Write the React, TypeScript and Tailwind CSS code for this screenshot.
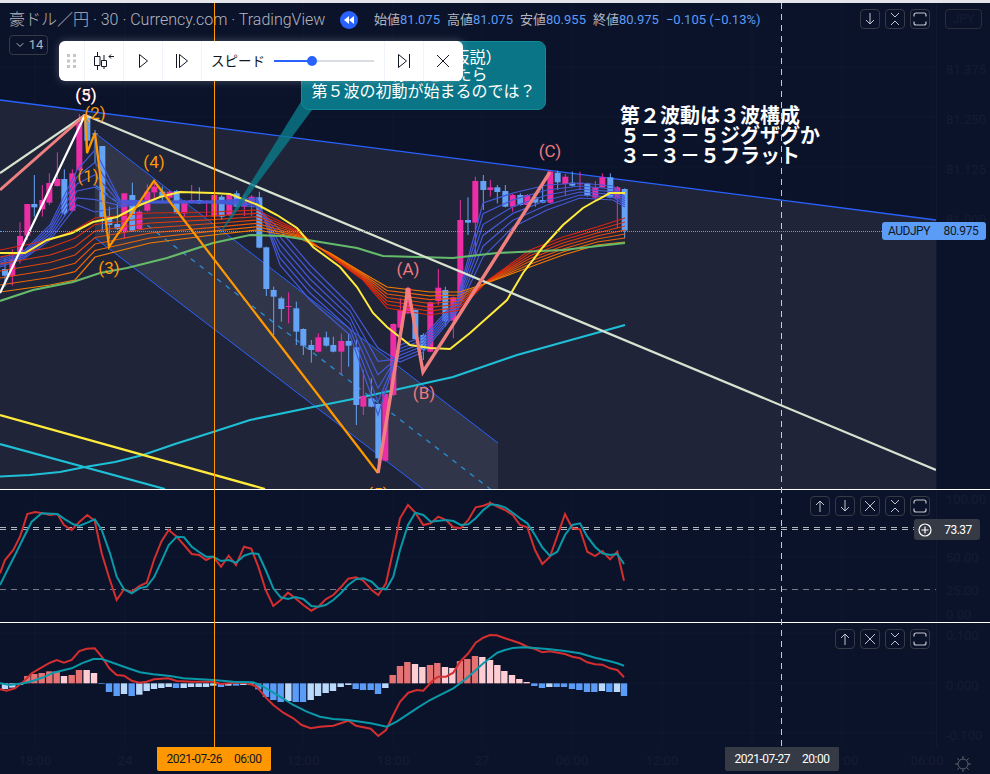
import { ChevronDown } from 'lucide-react'

type P = number[]
type Candle = [number, number, number, number, number, 'p' | 'b']

const line = (pts: P[]) => pts.map(p => p[0].toFixed(1) + ',' + p[1].toFixed(1)).join(' ')
// все данные сняты с увеличенных кропов (3x), тут пересчёт обратно
const zoomed = (pts: P[], ox: number, oy: number) => pts.map(p => [p[0] / 3 + ox, p[1] / 3 + oy])

const candlesA: Candle[] = [
  [15, 537, 557, 505, 590, 'b'], [37, 508, 557, 478, 587, 'p'], [60, 438, 497, 397, 520, 'p'],
  [82, 342, 437, 342, 450, 'p'], [103, 342, 352, 255, 380, 'b'], [127, 330, 358, 285, 380, 'p'],
  [148, 279, 338, 250, 345, 'p'], [172, 267, 288, 187, 290, 'p'], [193, 267, 370, 238, 375, 'b'],
  [217, 250, 362, 238, 365, 'p'], [238, 100, 240, 72, 245, 'p'], [262, 80, 152, 80, 190, 'b'],
  [285, 130, 132, 120, 220, 'b'], [307, 168, 382, 168, 425, 'b'], [328, 378, 405, 350, 448, 'b'],
  [352, 402, 417, 340, 420, 'b'], [373, 310, 423, 310, 445, 'p'], [397, 315, 422, 278, 425, 'b'],
  [418, 365, 417, 360, 420, 'p'], [442, 305, 362, 283, 365, 'p'], [463, 290, 307, 270, 330, 'p'],
  [487, 305, 320, 290, 335, 'b'], [509, 305, 323, 300, 330, 'p'], [530, 303, 370, 300, 372, 'b'],
  [553, 335, 370, 330, 380, 'p'], [575, 330, 338, 285, 340, 'p'], [598, 330, 340, 292, 342, 'b'],
  [620, 335, 338, 330, 380, 'p'], [643, 315, 380, 310, 382, 'p'], [665, 320, 380, 315, 390, 'b'],
  [688, 315, 375, 312, 378, 'p'], [710, 310, 350, 302, 352, 'b'], [733, 330, 350, 312, 378, 'p'],
  [755, 320, 340, 315, 378, 'p'],
]
const candlesB: Candle[] = [
  [88, 82, 233, 65, 235, 'b'], [109, 232, 357, 230, 378, 'b'], [131, 360, 380, 350, 495, 'b'],
  [154, 385, 417, 380, 455, 'b'], [176, 408, 410, 367, 460, 'p'], [199, 415, 485, 395, 525, 'b'],
  [220, 477, 527, 475, 555, 'b'], [244, 525, 540, 510, 578, 'b'], [265, 502, 545, 490, 547, 'p'],
  [289, 502, 527, 485, 530, 'b'], [310, 525, 545, 500, 547, 'b'], [334, 513, 545, 490, 615, 'p'],
  [356, 513, 527, 490, 590, 'b'], [379, 532, 705, 510, 765, 'b'], [400, 678, 710, 600, 735, 'p'],
  [424, 685, 710, 625, 712, 'b'], [445, 702, 865, 700, 890, 'b'], [466, 672, 872, 655, 875, 'p'],
  [490, 462, 675, 460, 678, 'p'], [511, 420, 473, 385, 475, 'p'], [534, 355, 430, 350, 432, 'p'],
  [556, 420, 507, 418, 510, 'b'], [580, 495, 540, 490, 570, 'b'], [601, 397, 545, 395, 547, 'p'],
  [625, 353, 393, 297, 405, 'p'], [646, 360, 453, 350, 470, 'b'], [670, 382, 452, 380, 505, 'p'],
  [691, 150, 392, 90, 395, 'p'], [714, 150, 158, 82, 195, 'b'], [736, 33, 158, 20, 260, 'p'],
  [760, 33, 60, 15, 120, 'b'], [781, 52, 60, 30, 80, 'p'], [802, 52, 66, 45, 100, 'b'],
  [826, 63, 110, 45, 112, 'b'], [848, 75, 110, 72, 125, 'p'], [871, 75, 105, 70, 107, 'b'],
  [892, 75, 105, 72, 107, 'p'], [916, 82, 98, 70, 110, 'b'], [938, 90, 98, 42, 100, 'b'],
  [961, 5, 98, 2, 100, 'p'], [983, 8, 37, 2, 60, 'b'], [1006, 20, 42, 12, 75, 'p'],
  [1027, 38, 47, 5, 50, 'b'], [1050, 40, 42, 5, 60, 'p'], [1072, 40, 78, 38, 80, 'b'],
  [1096, 52, 83, 33, 95, 'p'], [1117, 22, 52, 10, 54, 'p'], [1141, 22, 83, 10, 85, 'b'],
  [1162, 52, 85, 48, 175, 'p'], [1184, 57, 182, 55, 205, 'b'],
]

const ribbonX = [0, 50, 75, 95, 150, 213, 257, 297, 330, 363, 387, 430, 460, 487, 530, 563, 597, 625]
const ribbonFast = [250, 240, 230, 218, 213, 212, 210, 230, 256, 280, 308, 315, 310, 281, 250, 237, 227, 218]
const ribbonSlow = [292, 285, 280, 257, 243, 235, 230, 237, 253, 273, 287, 292, 292, 283, 267, 255, 245, 242]
const reds = ['#d4260f', '#d82f0f', '#dc3a0f', '#e0460e', '#e5540c', '#ec6608', '#f57c00']

const blueX = [0, 25, 50, 77, 95, 120, 150, 215, 257, 280, 310, 350, 378, 400, 423, 457, 483, 513, 547, 580, 613, 625]
const blueFast = [258, 250, 225, 170, 150, 200, 201, 201, 198, 265, 300, 335, 415, 345, 337, 300, 203, 193, 185, 183, 186, 197]
const blueSlow = [267, 258, 240, 205, 212, 207, 203, 203, 207, 230, 265, 305, 348, 362, 352, 312, 257, 227, 210, 198, 200, 207]

const yellow: P[] = [[0, 253], [25, 253], [47, 240], [72, 233], [93, 222], [117, 217], [140, 205], [160, 197], [180, 192], [213, 193], [230, 194], [258, 205], [277, 215], [297, 228], [313, 247], [340, 267], [357, 287], [373, 313], [387, 327], [410, 345], [430, 348], [450, 349], [470, 333], [507, 300], [523, 273], [543, 247], [563, 225], [583, 208], [597, 200], [610, 193], [625, 193]]
const green: P[] = [[0, 301], [33, 290], [73, 282], [100, 273], [127, 268], [167, 258], [213, 243], [250, 235], [283, 236], [357, 248], [383, 256], [453, 258], [497, 253], [563, 250], [625, 243]]
const cyan: P[] = [[0, 476.5], [30, 475], [60, 472], [85, 467], [115, 462], [143, 455], [175, 444], [213, 432], [250, 420], [313, 407], [363, 397], [453, 377], [517, 355], [625, 325]]

const stochRed = [...zoomed([[0, 250], [15, 210], [40, 180], [60, 140], [82, 72], [105, 66], [128, 70], [150, 75], [172, 72], [192, 105], [215, 120], [238, 96], [262, 75], [284, 92], [305, 190], [328, 265], [350, 330], [372, 298], [395, 305], [418, 288], [440, 278], [462, 210], [484, 155], [506, 120], [530, 140], [552, 165], [575, 192], [597, 195], [618, 210], [640, 200], [663, 230], [686, 197], [708, 225], [732, 170], [754, 176], [775, 230], [797, 300], [820, 348], [842, 330], [864, 308], [886, 325], [910, 345], [934, 362], [955, 350], [977, 328], [1000, 315], [1022, 292], [1045, 266], [1068, 262], [1090, 272], [1115, 300], [1135, 315], [1158, 280], [1180, 180], [1200, 85], [1224, 45], [1246, 68], [1270, 105], [1292, 100], [1315, 80], [1338, 90], [1360, 112], [1382, 115], [1405, 90], [1427, 52], [1450, 47], [1470, 40]], 0, 490),
  ...zoomed([[0, 38], [22, 50], [45, 60], [68, 75], [90, 105], [112, 112], [135, 180], [157, 222], [180, 200], [202, 138], [225, 72], [247, 115], [270, 118], [292, 185], [315, 198], [337, 183], [360, 208], [382, 185], [402, 272]], 490, 490)]
const stochTeal = [...zoomed([[0, 285], [25, 235], [50, 185], [72, 140], [95, 95], [125, 70], [172, 72], [195, 88], [220, 103], [238, 108], [262, 98], [284, 88], [305, 120], [330, 190], [350, 260], [372, 298], [395, 310], [418, 295], [440, 290], [462, 262], [484, 215], [506, 165], [530, 140], [552, 142], [575, 170], [597, 186], [618, 200], [640, 200], [663, 213], [686, 210], [708, 218], [732, 197], [754, 190], [775, 192], [797, 240], [820, 295], [842, 322], [864, 327], [886, 321], [910, 327], [934, 348], [955, 350], [977, 345], [1000, 330], [1022, 310], [1045, 285], [1068, 268], [1090, 265], [1115, 275], [1135, 295], [1158, 298], [1180, 260], [1200, 180], [1224, 105], [1246, 68], [1270, 75], [1292, 95], [1338, 90], [1360, 93], [1382, 105], [1405, 103], [1427, 85], [1450, 60], [1470, 45]], 0, 490),
  ...zoomed([[0, 43], [22, 45], [45, 52], [68, 68], [90, 85], [112, 100], [135, 135], [157, 172], [180, 198], [202, 185], [225, 135], [247, 105], [270, 100], [292, 140], [315, 170], [337, 190], [360, 195], [382, 192], [402, 222]], 490, 490)]

const macdRed = [...zoomed([[0, 598], [20, 602], [45, 595], [70, 575], [95, 550], [120, 535], [150, 518], [170, 510], [192, 518], [215, 510], [238, 483], [260, 476], [284, 475], [305, 500], [328, 535], [350, 555], [372, 557], [395, 572], [418, 578], [440, 575], [462, 568], [505, 565], [530, 573], [575, 575], [640, 575], [663, 582], [700, 578], [740, 578], [770, 590], [795, 620], [820, 645], [850, 668], [880, 685], [905, 705], [932, 715], [960, 710], [1000, 707], [1045, 692], [1068, 707], [1112, 716], [1135, 738], [1158, 720], [1180, 675], [1200, 635], [1225, 608], [1250, 600], [1270, 602], [1300, 570], [1315, 560], [1338, 560], [1360, 548], [1380, 515], [1405, 490], [1427, 458], [1450, 443], [1470, 435]], 0, 490),
  ...zoomed([[0, 435], [20, 436], [45, 445], [68, 452], [90, 460], [112, 470], [135, 477], [157, 487], [180, 484], [225, 492], [247, 500], [270, 505], [292, 517], [315, 523], [337, 524], [360, 535], [382, 540], [402, 562]], 490, 490)]
const macdTeal = [...zoomed([[0, 580], [30, 585], [70, 580], [100, 572], [130, 562], [160, 548], [190, 541], [215, 535], [245, 520], [280, 507], [305, 507], [330, 515], [380, 533], [420, 547], [460, 553], [510, 558], [550, 565], [640, 570], [700, 575], [760, 577], [790, 590], [840, 620], [880, 645], [920, 665], [960, 680], [1000, 687], [1045, 690], [1112, 700], [1160, 710], [1190, 695], [1250, 655], [1290, 630], [1360, 595], [1400, 565], [1450, 520]], 0, 490),
  ...zoomed([[0, 505], [22, 488], [45, 480], [68, 474], [100, 472], [135, 474], [180, 478], [225, 483], [270, 490], [315, 503], [360, 514], [382, 520], [402, 527]], 490, 490)]

// 0 светло-голубой, 1 голубой, 2 розовый, 3 светло-розовый
const histColors = ['#bbd9fb', '#5b9cf6', '#e57373', '#ffcdd2']
const histA: [number, number, number][] = [
  [15, 597, 0], [37, 593, 0], [60, 585, 0], [82, 558, 2], [103, 552, 2], [125, 549, 2], [148, 544, 2], [170, 544, 2], [192, 558, 3], [215, 555, 2], [237, 540, 2], [260, 540, 3], [282, 549, 3], [305, 582, 1], [327, 606, 1], [350, 618, 1], [372, 612, 0], [395, 618, 1], [418, 614, 0], [440, 603, 0], [462, 597, 0], [484, 594, 0], [506, 591, 0], [528, 594, 1], [551, 594, 0], [573, 591, 0], [596, 591, 0], [618, 591, 0], [640, 587, 0], [663, 591, 1], [685, 587, 0], [708, 587, 1], [730, 585, 0], [752, 584, 0], [775, 598, 1], [798, 621, 1], [820, 630, 1], [842, 636, 1], [865, 633, 0], [887, 636, 1], [909, 636, 1], [932, 630, 0], [954, 618, 0], [977, 609, 0], [999, 603, 0], [1022, 591, 0], [1045, 585, 0], [1067, 597, 1], [1089, 600, 1], [1112, 600, 1], [1134, 612, 1], [1156, 594, 0], [1178, 555, 2], [1200, 528, 2], [1222, 516, 2], [1245, 522, 3], [1267, 531, 3], [1290, 525, 2], [1312, 519, 2], [1335, 531, 3], [1357, 534, 3], [1380, 513, 2], [1402, 507, 2], [1425, 498, 2], [1447, 501, 3], [1470, 510, 3], [1492, 525, 3],
]
const histB: [number, number, number][] = [
  [43, 543, 3], [66, 555, 3], [88, 567, 3], [110, 576, 3], [133, 588, 1], [156, 594, 1], [178, 591, 0], [200, 591, 1], [222, 591, 1], [246, 597, 1], [268, 600, 1], [291, 606, 1], [313, 606, 1], [336, 603, 0], [358, 606, 1], [381, 606, 0], [402, 618, 1],
]

const gridX = [35, 125, 214, 303, 393, 482, 572, 662, 752, 842, 932]
const timeTicks: [string, number][] = [['18:00', 35], ['24', 125], ['12:00', 303], ['18:00', 393], ['27', 482], ['06:00', 572], ['12:00', 662], ['18:00', 842], ['06:00', 927]]

function GridLines({ rows }: { rows: number[] }) {
  return (
    <g stroke="#ffffff" strokeOpacity="0.025">
      {gridX.map(x => <line key={x} x1={x} x2={x} y1="0" y2="774" />)}
      {rows.map(y => <line key={y} x1="0" x2="936" y1={y} y2={y} />)}
    </g>
  )
}

function Candles({ data, ox, oy }: { data: Candle[]; ox: number; oy: number }) {
  return (
    <>
      {data.map(c => {
        const x = c[0] / 3 + ox
        const col = c[5] === 'p' ? '#ec2da6' : '#64a2f6'
        return (
          <g key={c[0]}>
            <line x1={x} x2={x} y1={c[3] / 3 + oy} y2={c[4] / 3 + oy} stroke={col} strokeWidth="1" />
            <rect x={x - 3} width="6" y={c[1] / 3 + oy} height={Math.max((c[2] - c[1]) / 3, 1)} fill={col} />
          </g>
        )
      })}
    </>
  )
}

function MainChart() {
  const labels = 'Roboto, sans-serif'
  return (
    <svg className="absolute inset-0 w-[936px] h-[486px]" viewBox="0 3 936 486">
      <GridLines rows={[67, 117, 167, 217, 267, 317, 367, 417, 467]} />
      <polygon points="0,100 936,220 936,489 0,489" fill="#1f2439" />
      <polygon points="95,133 498,443 498,489 423,489 95,238" fill="#303549" />
      <line x1="0" y1="100" x2="936" y2="220" stroke="#2962ff" strokeWidth="1.3" />
      <line x1="95" y1="133" x2="498" y2="443" stroke="#2962ff" strokeWidth="1" />
      <line x1="95" y1="238" x2="423" y2="489" stroke="#2962ff" strokeWidth="1" />
      <line x1="95" y1="185" x2="498" y2="495" stroke="#2a8fd8" strokeWidth="1.3" strokeDasharray="5 6" />

      <polyline points={line(cyan)} fill="none" stroke="#1fc0d6" strokeWidth="2.2" />
      <line x1="0" y1="415" x2="265" y2="489" stroke="#ffeb3b" strokeWidth="2.2" />
      <line x1="0" y1="444" x2="165" y2="489" stroke="#1fc0d6" strokeWidth="2.2" />

      <Candles data={candlesA} ox={0} oy={90} />
      <Candles data={candlesB} ox={230} oy={170} />

      {[0, 1, 2, 3, 4, 5].map(i => (
        <polyline
          key={i}
          fill="none"
          stroke="#4459d6"
          strokeWidth="1.2"
          points={line(blueX.map((x, k) => [x, blueFast[k] + ((blueSlow[k] - blueFast[k]) * i) / 5]))}
        />
      ))}
      {reds.map((c, i) => (
        <polyline
          key={c}
          fill="none"
          stroke={c}
          strokeWidth="1.2"
          points={line(ribbonX.map((x, k) => [x, ribbonFast[k] + ((ribbonSlow[k] - ribbonFast[k]) * i) / 6]))}
        />
      ))}
      <polyline points={line(green)} fill="none" stroke="#66bb6a" strokeWidth="2.2" />
      <polyline points={line(yellow)} fill="none" stroke="#ffeb3b" strokeWidth="2" />

      <line x1="85" y1="115" x2="936" y2="470" stroke="#d5e3cf" strokeWidth="2.2" />
      <line x1="0" y1="173" x2="85" y2="115" stroke="#d5e3cf" strokeWidth="2.2" />
      <line x1="0" y1="190" x2="85" y2="115" stroke="#f08080" strokeWidth="3" />
      <line x1="0" y1="293" x2="85" y2="115" stroke="#ffffff" strokeWidth="2.2" />

      <polyline points="85,115 87,153 95,133 109,247 154,181 378,473" fill="none" stroke="#ff9800" strokeWidth="2.2" />
      <polyline points="378,473 408,288 423,372 550,172" fill="none" stroke="#f08080" strokeWidth="3.4" />

      <g fontFamily={labels} fontSize="17" textAnchor="middle">
        <text x="86" y="101" fill="#f08080">(3)</text>
        <text x="86" y="101" fill="#ffffff">(5)</text>
        <g fill="#ff9800">
          <text x="95" y="119">(2)</text>
          <text x="88" y="182">(1)</text>
          <text x="109" y="274">(3)</text>
          <text x="154" y="168">(4)</text>
          <text x="378" y="500">(5)</text>
        </g>
        <g fill="#ef7a7e">
          <text x="408" y="275">(A)</text>
          <text x="424" y="399">(B)</text>
          <text x="550" y="157">(C)</text>
        </g>
      </g>
      <polygon points="214,242 302,100 312,110" fill="#0a7a8a" fillOpacity="0.8" />
    </svg>
  )
}

function Crosshair() {
  return (
    <svg className="absolute inset-0 w-[990px] h-[774px] pointer-events-none" viewBox="0 0 990 774">
      <line x1="214.5" x2="214.5" y1="3" y2="747" stroke="#ff9800" strokeWidth="1" />
      <line x1="781.5" x2="781.5" y1="3" y2="747" stroke="#c8cad0" strokeWidth="1" strokeDasharray="6 5" />
    </svg>
  )
}

function Glyph({ kind }: { kind: string }) {
  return (
    <svg width="14" height="14" viewBox="0 0 14 14" fill="none" stroke="currentColor" strokeWidth="1">
      {kind === 'up' && <path d="M7 13V2M3 6l4-4 4 4" />}
      {kind === 'down' && <path d="M7 1v11M3 8l4 4 4-4" />}
      {kind === 'close' && <path d="M2 2l10 10M12 2L2 12" />}
      {kind === 'collapse' && <path d="M3 1l4 4 4-4M3 13l4-4 4 4" />}
      {kind === 'max' && <path d="M1 4.500V3a2 2 0 0 1 2-2h8a2 2 0 0 1 2 2v1.500M1 9.500V11a2 2 0 0 0 2 2h8a2 2 0 0 0 2-2V9.500" strokeWidth="1.2" />}
    </svg>
  )
}

function PaneButtons({ kinds }: { kinds: string[] }) {
  return (
    <div className="absolute right-[6px] top-[6px] flex gap-[5px]">
      {kinds.map(k => (
        <button key={k} className="w-[20px] h-[20px] flex items-center justify-center rounded-[4px] border border-[#363a45] bg-[#0b132b] text-[#c3c5cc]">
          <Glyph kind={k} />
        </button>
      ))}
    </div>
  )
}

function AxisLabels({ items }: { items: [string, number][] }) {
  return (
    <div className="relative w-[54px] shrink-0 overflow-hidden border-l border-[#121a31] text-[13px] text-[#151c33]">
      {items.map(([t, y]) => (
        <div key={t} className="absolute left-[9px]" style={{ top: y }}>{t}</div>
      ))}
    </div>
  )
}

function Toolbar() {
  const cell = 'w-[39px] h-full flex items-center justify-center border-l border-[#f0f3fa] text-[#131722]'
  return (
    <div className="absolute left-[59px] top-[41px] w-[404px] h-[40px] flex items-center bg-white rounded-[6px] shadow-[0_0_8px_rgba(255,255,255,0.25)]">
      <div className="w-[25px] h-full flex items-center justify-center">
        <svg width="9" height="14" viewBox="0 0 9 14" fill="#c4c6cc">
          {[0, 1, 2].map(r => [0, 1].map(c => <rect key={r + '-' + c} x={c * 6} y={r * 5.5} width="3" height="3" />))}
        </svg>
      </div>
      <div className={cell}>
        <svg width="22" height="20" viewBox="0 0 22 20" fill="none" stroke="currentColor" strokeWidth="1">
          <path d="M4.500 1v5M4.500 14v5M1.500 5.500h5.500v9h-5.500zM11 4v6M11 15v3M8.500 9.500h5v6h-5z" />
          <path d="M16 5.500h5M18 3.500l-2 2 2 2" />
        </svg>
      </div>
      <div className={cell}>
        <svg width="12" height="16" viewBox="0 0 12 16" fill="none" stroke="currentColor"><path d="M2.500 1.500v13l8-6.500z" /></svg>
      </div>
      <div className={cell}>
        <svg width="14" height="16" viewBox="0 0 14 16" fill="none" stroke="currentColor"><path d="M1.500 1v14M4.500 1.500v13l8-6.500z" /></svg>
      </div>
      <div className="w-[183px] h-full flex items-center border-l border-[#f0f3fa] pl-[9px]">
        <span className="text-[13.5px] text-[#131722] w-[63px] shrink-0">スピード</span>
        <div className="relative w-[100px] h-[2px] bg-[#d9dce3]">
          <div className="w-[38px] h-full bg-[#2962ff]" />
          <div className="absolute left-[33px] top-[-4px] w-[10px] h-[10px] rounded-full bg-[#2962ff]" />
        </div>
      </div>
      <div className={cell}>
        <svg width="14" height="16" viewBox="0 0 14 16" fill="none" stroke="currentColor"><path d="M12.500 1v14M1.500 1.500v13l8-6.500z" /></svg>
      </div>
      <div className={cell}>
        <svg width="14" height="14" viewBox="0 0 14 14" fill="none" stroke="currentColor"><path d="M1 1l12 12M13 1L1 13" /></svg>
      </div>
    </div>
  )
}

function Ohlc({ k, v }: { k: string; v: string }) {
  return (
    <span className="text-[#b2b5be]">
      {k}
      <span className="text-[#5b9cf6]">{v}</span>
    </span>
  )
}

export default function App() {
  return (
    <div
      className="relative w-[990px] h-[774px] flex flex-col overflow-hidden bg-[#0b132b] select-none"
      style={{ fontFamily: 'Roboto, "Noto Sans CJK JP", sans-serif' }}
    >
      <div className="h-[3px] bg-[#e3e5ea]" />

      {/* основной график */}
      <div className="relative h-[486px] flex">
        <div className="relative w-[936px] overflow-hidden">
          <MainChart />
          <div className="relative h-[32px] pt-[2px] flex items-center pl-[9px]">
            <span className="text-[16px] font-light text-[#b2b5be] w-[325px] shrink-0 whitespace-pre">豪ドル／円 · 30 · Currency.com · TradingView</span>
            <span className="ml-[6px] w-[18px] h-[18px] rounded-full bg-[#2962ff] flex items-center justify-center">
              <svg width="10" height="8" viewBox="0 0 10 8" fill="#fff"><path d="M5 0v8L0 4zM10 0v8L5 4z" /></svg>
            </span>
            <div className="ml-[16px] flex gap-[7px] text-[13px]">
              <Ohlc k="始値" v="81.075" />
              <Ohlc k="高値" v="81.075" />
              <Ohlc k="安値" v="80.955" />
              <Ohlc k="終値" v="80.975" />
              <span className="text-[#5b9cf6]">−0.105 (−0.13%)</span>
            </div>
          </div>
          <div className="relative ml-[9px] w-[39px] h-[20px] flex items-center justify-center gap-[3px] rounded-[4px] border border-[#363a45] text-[#b2b5be] text-[13px]">
            <ChevronDown size={12} />
            14
          </div>
          <PaneButtons kinds={['down', 'collapse', 'max']} />
          <div className="absolute left-[620px] top-[103px] text-[20px] leading-[20px] font-bold text-white whitespace-pre">
            <div>第２波動は３波構成</div>
            <div>５－３－５ジグザグか</div>
            <div>３－３－５フラット</div>
          </div>
          <div className="absolute left-0 top-[228px] w-[884px] border-t border-dotted border-[#5b9cf6]" />
          <div className="absolute left-[882px] top-[219px] w-[54px] h-[18px] flex items-center justify-center rounded-l-[3px] bg-[#5b9cf6] text-[12px] tracking-[-0.5px] text-[#131722]">AUDJPY</div>
          <div className="absolute left-[301px] top-[38px] w-[245px] h-[69px] pt-[7px] rounded-[8px] border border-[#118a99] bg-[#097586] text-center text-[16px] leading-[17px] text-white">
            <div className="pr-[4px]">第５波の上昇（仮説）</div>
            <div>この線を超えたら</div>
            <div>第５波の初動が始まるのでは？</div>
          </div>
        </div>
        <AxisLabels items={[['81.375', 57], ['81.250', 107], ['81.125', 157], ['81.000', 207]]} />
        <div className="absolute left-[936px] top-[219px] w-[50px] h-[18px] flex items-center justify-center rounded-r-[3px] bg-[#5b9cf6] text-[12px] tracking-[-0.3px] text-[#131722]">80.975</div>
        <div className="absolute left-[945px] top-[6px] w-[37px] h-[20px] rounded-[4px] border border-[#2a2e39] text-[12px] text-[#151c33] flex items-center justify-center">JPY</div>
      </div>

      <div className="h-px bg-white" />

      {/* ストキャス */}
      <div className="relative h-[132px] flex">
        <div className="relative w-[936px] overflow-hidden">
          <svg className="absolute inset-0 w-[936px] h-[132px]" viewBox="0 490 936 132">
            <GridLines rows={[557, 590]} />
            <line x1="0" x2="936" y1="527.500" y2="527.500" stroke="#b2b5be" strokeDasharray="6 5" />
            <line x1="0" x2="936" y1="529.500" y2="529.500" stroke="#b2b5be" strokeDasharray="6 5" />
            <line x1="0" x2="936" y1="589.500" y2="589.500" stroke="#787b86" strokeDasharray="6 5" />
            <polyline points={line(stochRed)} fill="none" stroke="#d32f2f" strokeWidth="2" />
            <polyline points={line(stochTeal)} fill="none" stroke="#0a99a8" strokeWidth="2" />
          </svg>
          <PaneButtons kinds={['up', 'down', 'close', 'collapse', 'max']} />
          <div className="absolute left-[914px] top-[29px] w-[22px] h-[21px] flex items-center justify-center rounded-l-[3px] bg-[#363a45]">
            <svg width="14" height="14" viewBox="0 0 14 14" fill="none" stroke="#fff" strokeWidth="1.2">
              <circle cx="7" cy="7" r="6" />
              <path d="M7 3.500v7M3.500 7h7" />
            </svg>
          </div>
        </div>
        <AxisLabels items={[['100.00', 0], ['50.00', 58], ['25.00', 91], ['0.00', 115]]} />
        <div className="absolute left-[936px] top-[29px] w-[44px] h-[21px] flex items-center justify-center rounded-r-[3px] bg-[#363a45] text-[12px] tracking-[-0.5px] text-white">73.37</div>
      </div>

      <div className="h-px bg-white" />

      {/* MACD */}
      <div className="relative h-[124px] flex">
        <div className="relative w-[936px] overflow-hidden">
          <svg className="absolute inset-0 w-[936px] h-[124px]" viewBox="0 623 936 124">
            <GridLines rows={[633, 683, 733]} />
            {histA.map(b => (
              <rect key={b[0]} x={b[0] / 3 - 3.2} width="6.400" y={Math.min(b[1], 580) / 3 + 490} height={Math.abs(b[1] - 580) / 3} fill={histColors[b[2]]} />
            ))}
            {histB.map(b => (
              <rect key={b[0]} x={b[0] / 3 + 490 - 3.2} width="6.400" y={Math.min(b[1], 580) / 3 + 490} height={Math.abs(b[1] - 580) / 3} fill={histColors[b[2]]} />
            ))}
            <polyline points={line(macdRed)} fill="none" stroke="#d32f2f" strokeWidth="2" />
            <polyline points={line(macdTeal)} fill="none" stroke="#0a99a8" strokeWidth="2" />
          </svg>
          <PaneButtons kinds={['up', 'close', 'collapse', 'max']} />
        </div>
        <AxisLabels items={[['0.100', 3], ['0.000', 53], ['-0.100', 103]]} />
      </div>

      {/* ось времени */}
      <div className="relative h-[27px] text-[13px] text-[#151c33]">
        {timeTicks.map(([t, x]) => (
          <span key={t + x} className="absolute top-[4px] -translate-x-1/2" style={{ left: x }}>{t}</span>
        ))}
        <div className="absolute left-[157px] top-0 w-[114px] h-[24px] flex items-center justify-center gap-[12px] rounded-b-[2px] bg-[#ff9800] text-[12px] tracking-[-0.5px] text-[#131722]">
          <span>2021-07-26</span>
          <span>06:00</span>
        </div>
        <div className="absolute left-[725px] top-0 w-[114px] h-[24px] flex items-center justify-center gap-[12px] rounded-b-[2px] bg-[#363a45] text-[12px] tracking-[-0.5px] text-white">
          <span>2021-07-27</span>
          <span>20:00</span>
        </div>
        <svg className="absolute left-[955px] top-[9px]" width="16" height="16" viewBox="0 0 16 16" fill="none" stroke="#5d606b" strokeWidth="1">
          <circle cx="8" cy="8" r="5" />
          <path d="M8 0v3M8 13v3M0 8h3M13 8h3M2.300 2.300l2 2M11.700 11.700l2 2M13.700 2.300l-2 2M4.300 11.700l-2 2" />
        </svg>
      </div>

      <Crosshair />
      <div className="absolute inset-0 pointer-events-none">
        <Toolbar />
      </div>
    </div>
  )
}
